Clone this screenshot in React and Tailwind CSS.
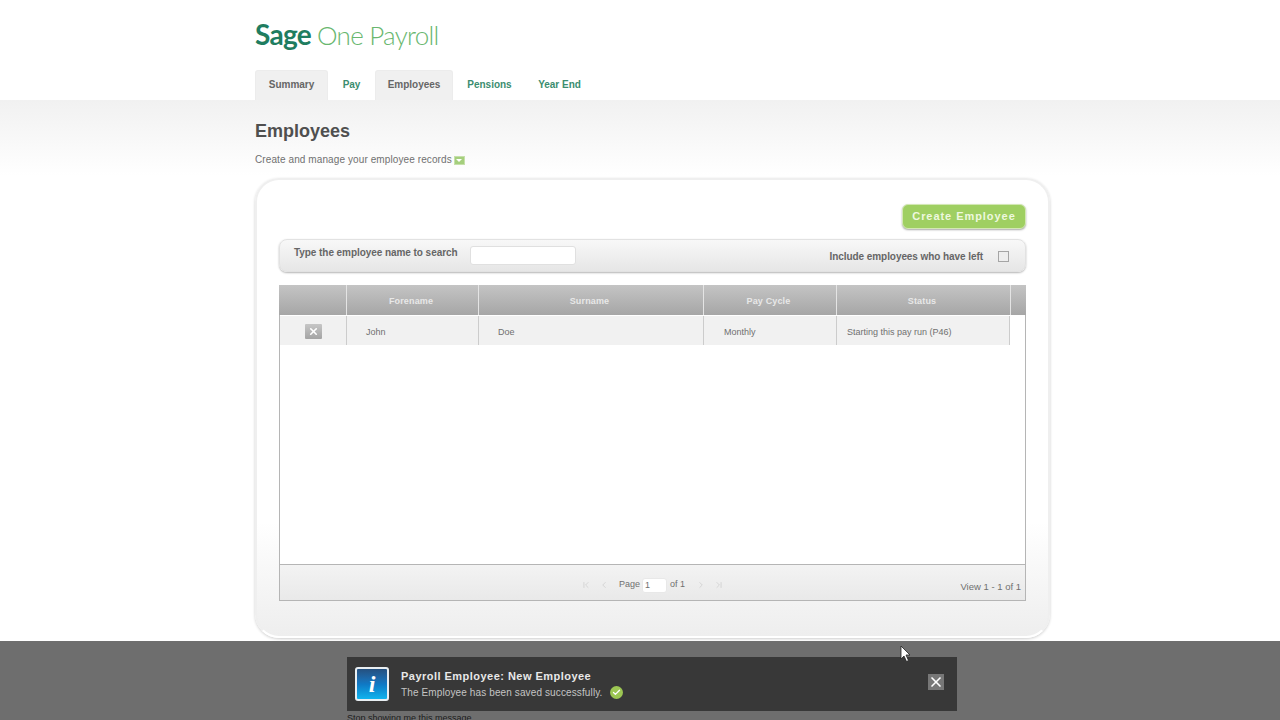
import { Check, X, ChevronFirst, ChevronLast, ChevronLeft, ChevronRight } from 'lucide-react';

const tabs = [
    { label: 'Summary', w: 'w-[73px]', active: true },
    { label: 'Pay', w: 'w-[47px]' },
    { label: 'Employees', w: 'w-[78px]', active: true },
    { label: 'Pensions', w: 'w-[73px]' },
    { label: 'Year End', w: 'w-[67px]' },
];

const App = () => {
    return (
        <div className="w-[1280px] h-[720px] overflow-hidden flex flex-col bg-white font-['Liberation_Sans',Arial,sans-serif] relative">
            {/* Header */}
            <div className="h-[100px] pl-[255px] flex flex-col shrink-0 bg-white">
                <div className="h-[70px] pt-[15px] font-['Lato',sans-serif] leading-[38px] whitespace-nowrap">
                    <span className="text-[28px] tracking-[-0.7px] font-bold text-[#1f7d60]">Sage</span>
                    <span className="text-[26px] tracking-[-0.75px] font-light text-[#69b76f] ml-[6px]">One Payroll</span>
                </div>
                <div className="flex h-[30px]">
                    {tabs.map((tab) => (
                        <div
                            key={tab.label}
                            className={`${tab.w} flex items-center justify-center pb-[2px] text-[10px] font-bold tracking-[-0.02px] ${tab.active ? 'bg-[#f0f0f0] text-[#666666] border border-b-0 border-[#ececec] rounded-t-[3px]' : 'text-[#3b8d6f]'}`}
                        >
                            {tab.label}
                        </div>
                    ))}
                </div>
            </div>

            {/* Content */}
            <div className="h-[541px] shrink-0 pl-[255px] bg-gradient-to-b from-[#f1f1f1] via-white via-[14%] to-white">
                <h1 className="pt-[21px] text-[18px] leading-[20px] font-bold text-[#4f4f4f]">Employees</h1>
                <div className="mt-[12px] flex items-center text-[10px] leading-[14px] tracking-[0.1px] text-[#707070]">
                    Create and manage your employee records
                    <span className="ml-[2px] w-[11px] h-[9px] bg-[#a5cf7d] border border-[#c6e0ab] flex items-center justify-center">
                        <span className="w-0 h-0 border-x-[3px] border-x-transparent border-t-[3px] border-t-white"></span>
                    </span>
                </div>

                {/* Card */}
                <div className="mt-[11px] w-[795px] h-[460px] rounded-[24px] border-2 border-[#efefef] border-b-white bg-gradient-to-b from-white via-white via-[75%] to-[#eeeeee] shadow-[0_1px_3px_rgba(0,0,0,0.2)] px-[22px] pt-[24px]">
                    <div className="flex justify-end">
                        <div className="w-[124px] h-[25px] rounded-[6px] bg-[#9fcf62] border border-[#d3e8b4] shadow-[0_1px_2px_rgba(0,0,0,0.35)] flex items-center justify-center text-[11px] font-bold tracking-[0.95px] text-[#eef8df]">
                            Create Employee
                        </div>
                    </div>

                    {/* Search bar */}
                    <div className="mt-[10px] h-[33px] rounded-[8px] border border-[#e2e2e2] bg-gradient-to-b from-[#f8f8f8] to-[#e6e6e6] shadow-[0_1px_2px_rgba(0,0,0,0.3)] flex pl-[14px] pr-[16px] text-[10px] font-bold text-[#666666]">
                        <span className="mt-[6px] leading-[13px] tracking-[-0.06px]">Type the employee name to search</span>
                        <div className="ml-[12px] mt-[6px] w-[106px] h-[19px] bg-white border border-[#e0e0e0] rounded-[3px]"></div>
                        <span className="ml-auto mt-[10px] leading-[13px] tracking-[-0.07px]">Include employees who have left</span>
                        <div className="ml-[15px] mt-[11px] w-[11px] h-[11px] border border-[#a5a5a5] bg-[#eeeeee]"></div>
                    </div>

                    {/* Table */}
                    <div className="mt-[13px] h-[316px] border border-t-0 border-[#b5b5b5] bg-white flex flex-col">
                        <div className="grid grid-cols-[67px_132px_225px_133px_174px_14px] h-[30px] bg-gradient-to-b from-[#c4c4c4] to-[#a6a6a6] text-[9px] font-bold tracking-[0.15px] text-[#e8e8e8] -mx-px pl-px">
                            <div className="border-r border-[#e4e4e4]"></div>
                            <div className="border-r border-[#e4e4e4] pt-[3px] pr-[3px] flex items-center justify-center">Forename</div>
                            <div className="border-r border-[#e4e4e4] pt-[3px] pr-[3px] flex items-center justify-center">Surname</div>
                            <div className="border-r border-[#e4e4e4] pt-[3px] pr-[3px] flex items-center justify-center">Pay Cycle</div>
                            <div className="border-r border-[#e4e4e4] pt-[3px] pr-[3px] flex items-center justify-center">Status</div>
                            <div></div>
                        </div>
                        <div className="mt-px grid grid-cols-[67px_132px_225px_133px_173px] h-[29px] text-[9px] text-[#707070]">
                            <div className="border-r border-[#cccccc] bg-[#f1f1f1] flex items-center justify-center">
                                <span className="w-[17px] h-[15px] mt-[1px] rounded-[1px] bg-gradient-to-b from-[#c6c6c6] to-[#a4a4a4] flex items-center justify-center">
                                    <X size={11} strokeWidth={3.5} className="text-white" />
                                </span>
                            </div>
                            <div className="border-r border-[#cccccc] bg-[#f1f1f1] flex items-center pt-[5px] pl-[19px]">John</div>
                            <div className="border-r border-[#cccccc] bg-[#f1f1f1] flex items-center pt-[5px] pl-[19px]">Doe</div>
                            <div className="border-r border-[#cccccc] bg-[#f1f1f1] flex items-center pt-[5px] pl-[20px]">Monthly</div>
                            <div className="border-r border-[#cccccc] bg-[#f1f1f1] flex items-center pt-[5px] pl-[10px]">Starting this pay run (P46)</div>
                        </div>
                        <div className="flex-1"></div>
                        {/* Pager */}
                        <div className="h-[36px] border-t border-[#b5b5b5] bg-gradient-to-b from-[#f3f3f3] to-[#e9e9e9] relative flex items-center justify-center pt-[5px] text-[9px] text-[#707070]">
                            <div className="flex items-center text-[#d0d0d0]">
                                <ChevronFirst size={10} />
                                <ChevronLeft size={10} className="ml-[8px]" />
                                <span className="ml-[10px] text-[#707070]">Page</span>
                                <span className="ml-[2px] w-[25px] h-[15px] bg-white rounded-[3px] border border-[#e8e8e8] pl-[2px] leading-[13px] text-[#707070]">1</span>
                                <span className="ml-[3px] text-[#707070]">of 1</span>
                                <ChevronRight size={10} className="ml-[11px]" />
                                <ChevronLast size={10} className="ml-[8px]" />
                            </div>
                            <span className="absolute right-[4px] top-[15px] text-[9.5px] text-[#707070]">View 1 - 1 of 1</span>
                        </div>
                    </div>
                </div>
            </div>

            {/* Notification bar */}
            <div className="flex-1 bg-[#6e6e6e] pl-[347px] pt-[16px] overflow-hidden">
                <div className="w-[610px] h-[54px] bg-[#383838] flex items-center pl-[8px] pr-[13px]">
                    <div className="w-[34px] h-[34px] rounded-[3px] border-2 border-[#e8eef2] bg-gradient-to-b from-[#24507f] via-[#0f78c4] to-[#10b4ee] flex items-center justify-center text-white text-[24px] font-bold italic font-['Liberation_Serif',serif] leading-none">
                        i
                    </div>
                    <div className="ml-[12px] flex-1">
                        <div className="text-[11px] leading-[14px] font-bold tracking-[0.47px] text-[#e8e8e8]">Payroll Employee: New Employee</div>
                        <div className="mt-[3px] flex items-center text-[10px] leading-[14px] tracking-[0.12px] text-[#c4c4c4]">
                            The Employee has been saved successfully.
                            <span className="ml-[7px] w-[13px] h-[13px] rounded-full bg-[#9cc653] flex items-center justify-center">
                                <Check size={9} strokeWidth={3.5} className="text-white" />
                            </span>
                        </div>
                    </div>
                    <div className="-mt-[4px] w-[16px] h-[16px] bg-[#777777] flex items-center justify-center">
                        <X size={16} strokeWidth={2.5} className="text-white" />
                    </div>
                </div>
                <div className="mt-[1px] text-[9px] leading-[12px] text-[#1c1c1c]">Stop showing me this message</div>
            </div>

            {/* Mouse cursor */}
            <svg className="absolute left-[900px] top-[645px]" width="12" height="18" viewBox="0 0 12 18">
                <path d="M1 1 L1 14 L4 11 L6.5 16.5 L8.5 15.5 L6 10 L10 10 Z" fill="#ffffff" stroke="#222222" strokeWidth="0.8" />
            </svg>
        </div>
    );
};

export default App;
